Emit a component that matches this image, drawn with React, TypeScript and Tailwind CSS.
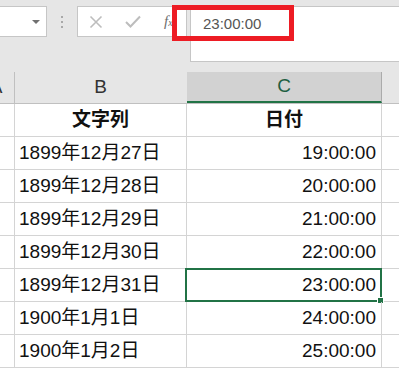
import React from 'react'

const rows = [
  ['1899年12月27日', '19:00:00'],
  ['1899年12月28日', '20:00:00'],
  ['1899年12月29日', '21:00:00'],
  ['1899年12月30日', '22:00:00'],
  ['1899年12月31日', '23:00:00'],
  ['1900年1月1日', '24:00:00'],
  ['1900年1月2日', '25:00:00'],
]

const font = { fontFamily: '"Liberation Sans", "Noto Sans CJK JP", sans-serif' }

function Toolbar() {
  return (
    <div className="relative h-[72px] bg-[#e6e6e6]">
      <div className="flex items-start pt-[6px]">
        {/* name box */}
        <div className="-ml-[2px] flex h-[31px] w-[49px] shrink-0 items-center justify-end border border-[#c6c6c6] bg-white pr-[6px]">
          <div className="h-0 w-0 border-x-[4px] border-t-[4px] border-x-transparent border-t-[#707070]" />
        </div>
        <div className="flex h-[31px] w-[30px] shrink-0 flex-col items-center justify-center gap-[3px]">
          <div className="h-[2px] w-[2px] bg-[#a8a8a8]" />
          <div className="h-[2px] w-[2px] bg-[#a8a8a8]" />
          <div className="h-[2px] w-[2px] bg-[#a8a8a8]" />
        </div>
        {/* cancel / enter / fx */}
        <div className="flex h-[31px] w-[110px] shrink-0 items-center border border-[#c6c6c6] bg-white">
          <svg width="14" height="14" viewBox="0 0 14 14" className="ml-[11px]">
            <path d="M1.5 1.5 L12.5 12.5 M12.5 1.5 L1.5 12.5" stroke="#bdbdbd" strokeWidth="1.6" fill="none" />
          </svg>
          <svg width="16" height="13" viewBox="0 0 16 13" className="ml-[22px]">
            <path d="M1 7 L5.5 11.5 L15 1.5" stroke="#bdbdbd" strokeWidth="2" fill="none" />
          </svg>
          <span
            className="ml-[23px] text-[15px] italic leading-none text-[#6e6e6e]"
            style={{ fontFamily: '"Liberation Serif", serif' }}
          >
            f<span className="text-[10px]">x</span>
          </span>
        </div>
        {/* formula input */}
        <div className="ml-[3px] h-[56px] w-[230px] shrink-0 border border-[#c6c6c6] bg-white pl-[12px] pt-[4px]">
          <span className="text-[15px] leading-[22px] text-[#555]" style={font}>
            23:00:00
          </span>
        </div>
      </div>
      {/* annotation */}
      <div className="absolute left-[172px] top-[5px] h-[36px] w-[122px] border-[5px] border-[#ed1c24]" />
    </div>
  )
}

function HeaderRow() {
  return (
    <div className="flex h-[32px] border-b border-[#c0c0c0] bg-[#e6e6e6] text-[19px] text-[#333]" style={font}>
      <div className="-ml-[22px] flex w-[37px] shrink-0 items-center justify-center border-r border-[#c0c0c0]">A</div>
      <div className="flex w-[172px] shrink-0 items-center justify-center border-r border-[#e6e6e6]">B</div>
      <div className="flex w-[195px] shrink-0 items-center justify-center border-b-2 border-r border-b-[#217346] border-r-[#ababab] bg-[#d2d2d2] text-[#1f5f42]">
        C
      </div>
      <div className="flex-1" />
    </div>
  )
}

function Row({ b, c, bold, selected }: { b: string; c: string; bold?: boolean; selected?: boolean }) {
  return (
    <div className="flex h-[33px] border-b border-[#d4d4d4] text-[19px] leading-[32px] text-[#111]" style={font}>
      <div className="-ml-[22px] w-[37px] shrink-0 border-r border-[#d4d4d4]" />
      <div
        className={
          bold
            ? 'flex w-[172px] shrink-0 items-center justify-center border-r border-[#d4d4d4] font-bold'
            : 'flex w-[172px] shrink-0 items-center border-r border-[#d4d4d4] pl-[4px]'
        }
      >
        {b}
      </div>
      <div
        className={
          bold
            ? 'flex w-[195px] shrink-0 items-center justify-center border-r border-[#d4d4d4] font-bold'
            : 'relative flex w-[195px] shrink-0 items-center justify-end border-r border-[#d4d4d4] pr-[5px]'
        }
      >
        {c}
        {selected && (
          <>
            <div className="absolute -left-[2px] -top-[1px] h-[34px] w-[197px] border-2 border-[#217346]" />
            <div className="absolute left-[190px] top-[28px] h-[7px] w-[7px] border border-white bg-[#217346]" />
          </>
        )}
      </div>
      <div className="flex-1" />
    </div>
  )
}

export default function App() {
  return (
    <div className="relative h-[370px] w-[399px] overflow-hidden bg-white">
      <Toolbar />
      <HeaderRow />
      <Row b="文字列" c="日付" bold />
      {rows.map(([b, c], i) => (
        <Row key={b} b={b} c={c} selected={i === 4} />
      ))}
    </div>
  )
}
